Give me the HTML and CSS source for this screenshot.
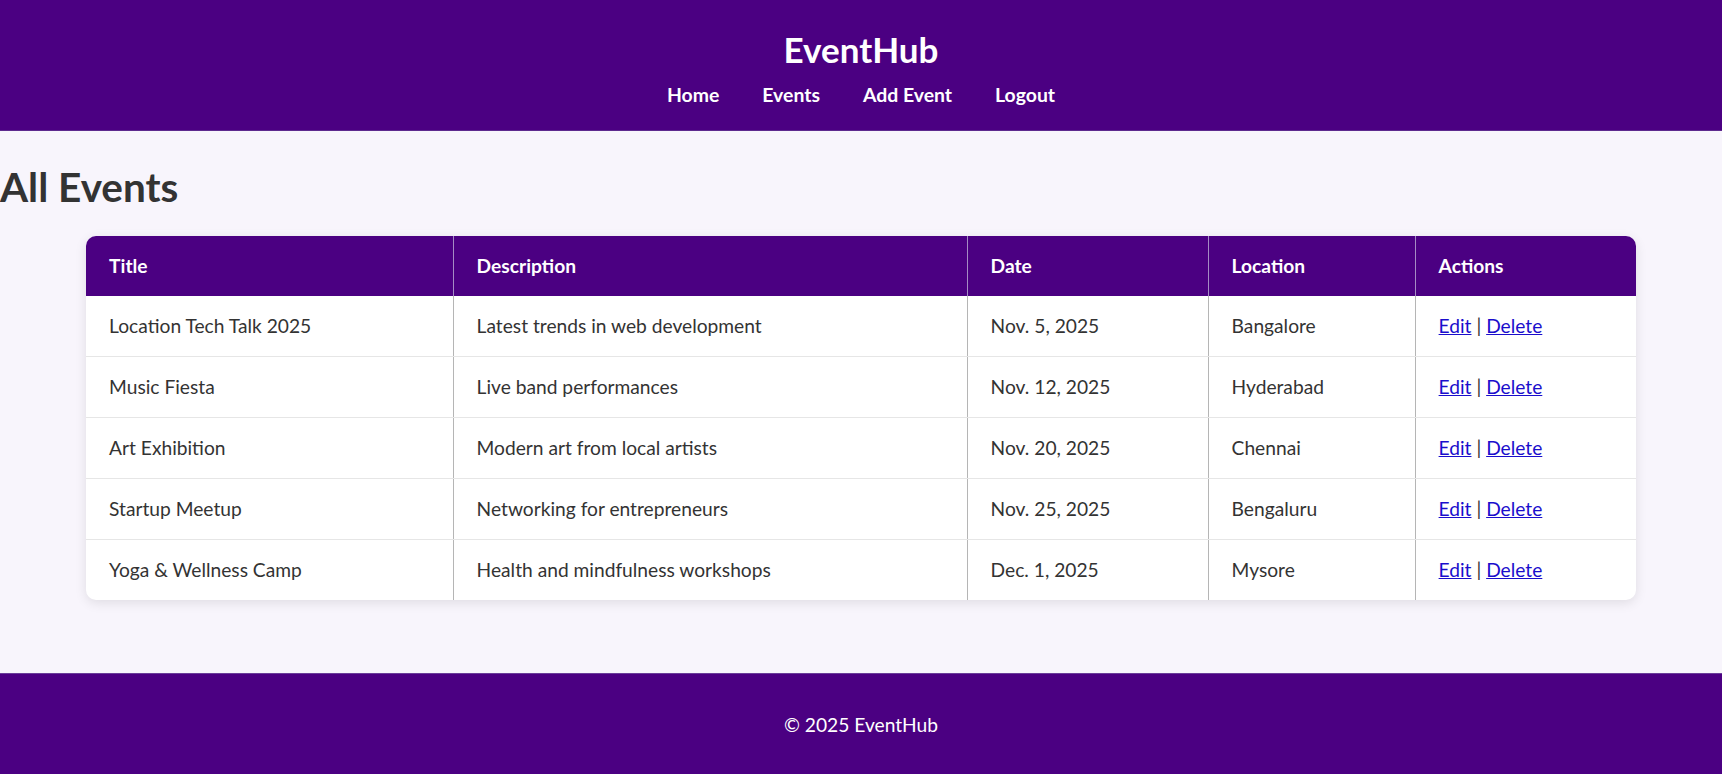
FILE: index.html
```html
<!DOCTYPE html>
<html lang="en">
<head>
<meta charset="utf-8">
<title>EventHub - All Events</title>
<link rel="stylesheet" href="styles.css">
</head>
<body>
<header class="site-header">
  <h1 class="brand">EventHub</h1>
  <nav class="nav">
    <a href="#">Home</a>
    <a href="#">Events</a>
    <a href="#">Add Event</a>
    <a href="#">Logout</a>
  </nav>
</header>
<main class="content">
  <h2 class="page-title">All Events</h2>
  <div class="table-card">
    <table class="events">
      <colgroup>
        <col class="c-title"><col class="c-desc"><col class="c-date"><col class="c-loc"><col class="c-act">
      </colgroup>
      <thead>
        <tr><th>Title</th><th>Description</th><th>Date</th><th>Location</th><th>Actions</th></tr>
      </thead>
      <tbody>
        <tr><td>Location Tech Talk 2025</td><td>Latest trends in web development</td><td>Nov. 5, 2025</td><td>Bangalore</td><td><a href="#">Edit</a> | <a href="#">Delete</a></td></tr>
        <tr><td>Music Fiesta</td><td>Live band performances</td><td>Nov. 12, 2025</td><td>Hyderabad</td><td><a href="#">Edit</a> | <a href="#">Delete</a></td></tr>
        <tr><td>Art Exhibition</td><td>Modern art from local artists</td><td>Nov. 20, 2025</td><td>Chennai</td><td><a href="#">Edit</a> | <a href="#">Delete</a></td></tr>
        <tr><td>Startup Meetup</td><td>Networking for entrepreneurs</td><td>Nov. 25, 2025</td><td>Bengaluru</td><td><a href="#">Edit</a> | <a href="#">Delete</a></td></tr>
        <tr><td>Yoga &amp; Wellness Camp</td><td>Health and mindfulness workshops</td><td>Dec. 1, 2025</td><td>Mysore</td><td><a href="#">Edit</a> | <a href="#">Delete</a></td></tr>
      </tbody>
    </table>
  </div>
</main>
<footer class="site-footer">
  <p>&copy; 2025 EventHub</p>
</footer>
</body>
</html>
```
FILE: styles.css
```css
* { box-sizing: border-box; }
html, body { margin: 0; padding: 0; }
body {
  background: #f8f5fc;
  font-family: Lato, "Open Sans", "Noto Sans", sans-serif;
  font-size: 19.2px;
  color: #333;
}
.site-header {
  background: #4b0082;
  color: #fff;
  text-align: center;
  padding: 29px 0 22px;
  border-bottom: 1px solid #5e2a8e;
}
.brand {
  margin: 0;
  font-size: 35px;
  line-height: 40px;
  font-weight: 700;
}
.nav {
  margin-top: 13px;
  display: flex;
  justify-content: center;
  gap: 43px;
  line-height: 26px;
}
.nav a {
  color: #fff;
  text-decoration: none;
  font-weight: 700;
  font-size: 19.4px;
}
.content {
  padding: 33px 0 73px;
}
.page-title {
  margin: 0 0 26px;
  font-size: 40.5px;
  line-height: 46px;
  font-weight: 700;
  color: #333;
}
.table-card {
  width: 90%;
  margin: 0 auto;
  background: #fff;
  border-radius: 10px;
  box-shadow: 0 3px 12px rgba(0, 0, 0, 0.1);
  overflow: hidden;
}
.events {
  width: 100%;
  border-collapse: collapse;
  table-layout: fixed;
}
.c-title { width: 367px; }
.c-desc { width: 514px; }
.c-date { width: 241px; }
.c-loc { width: 207px; }
.c-act { width: auto; }
.events th {
  background: #4b0082;
  color: #fff;
  text-align: left;
  font-weight: 700;
  padding: 18px 23px;
  line-height: 24px;
  border-right: 1px solid #a58bc4;
}
.events td {
  padding: 18px 23px;
  line-height: 24px;
  border-right: 1px solid #b5b5b5;
  border-bottom: 1px solid #e6e6e6;
}
.events th:last-child, .events td:last-child { border-right: none; }
.events tbody tr:last-child td { border-bottom: none; }
.events a { color: #1a0dcc; }
.site-footer {
  background: #4b0082;
  color: #fff;
  text-align: center;
  padding: 38px 0 39px;
  border-top: 1px solid #6a3c99;
}
.site-footer p {
  margin: 0;
  line-height: 26px;
}
```
